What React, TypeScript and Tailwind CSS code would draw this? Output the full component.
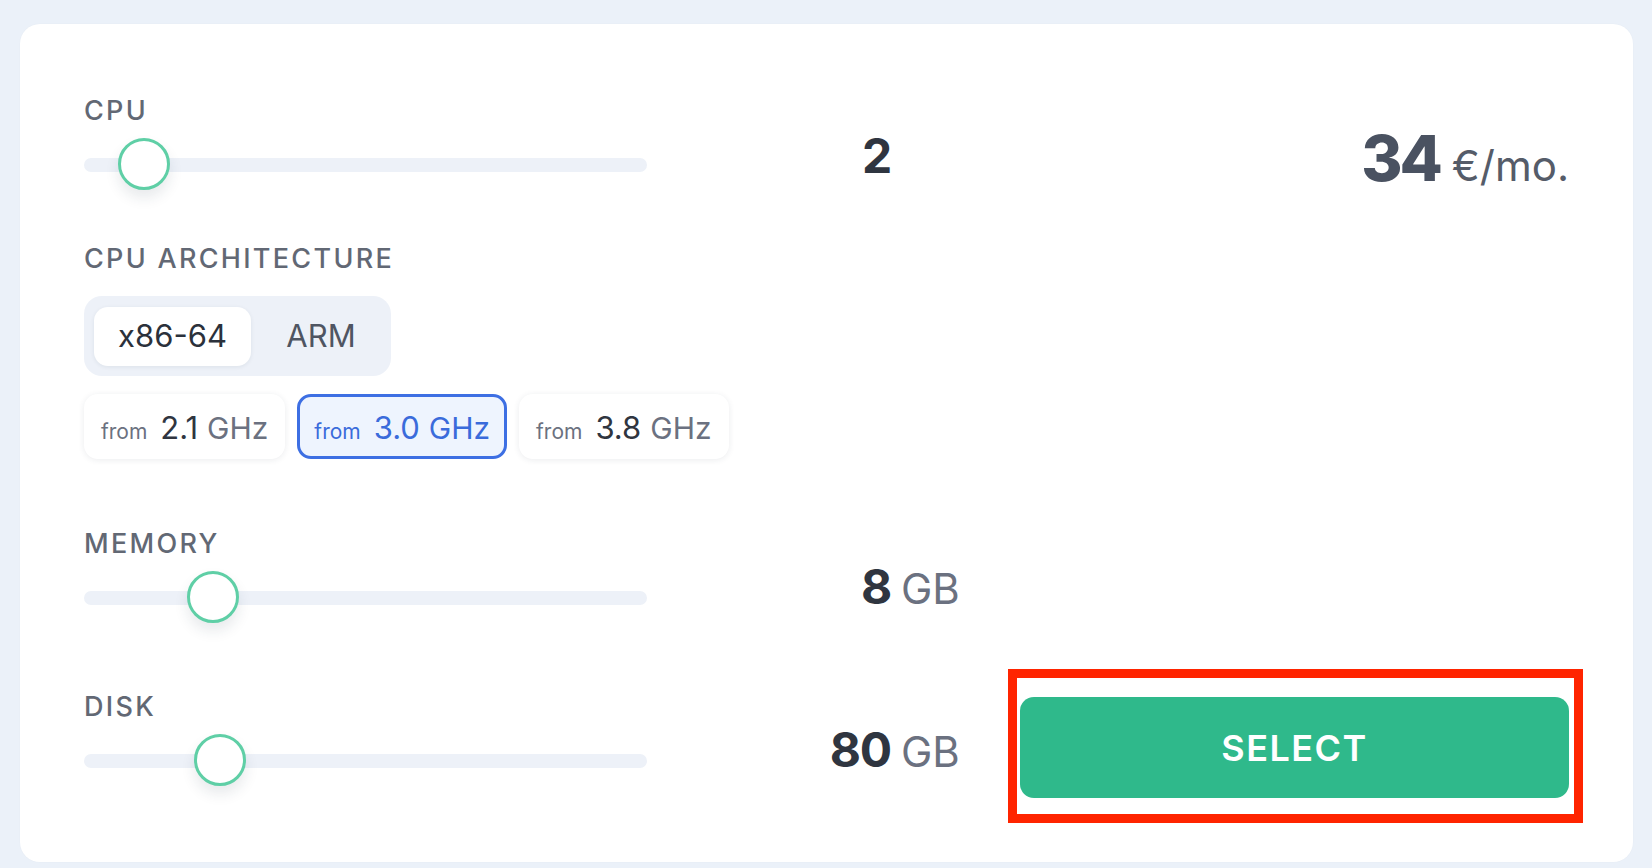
const font = { fontFamily: "Inter, 'Noto Sans', sans-serif" };

function Label({ children }: { children: React.ReactNode }) {
  return (
    <div className="h-[26px] text-[27px] leading-none font-medium tracking-[0.085em] text-[#626874] uppercase">
      {children}
    </div>
  );
}

function Slider({ thumb }: { thumb: string }) {
  return (
    <div className="relative mt-[15px] h-[52px] w-[563px]">
      <div className="absolute inset-x-0 top-[20px] h-[14px] rounded-full bg-[#edf1f8]" />
      <div
        className={`absolute top-0 h-[52px] w-[52px] rounded-full border-[3px] border-[#5fcfa6] bg-white shadow-[0_8px_14px_rgba(30,45,70,0.10)] ${thumb}`}
      />
    </div>
  );
}

function Value({ num, unit }: { num: string; unit?: string }) {
  return (
    <div className="flex items-baseline">
      <span className="w-[164px] text-right text-[48px] leading-none font-bold tracking-tight text-[#2f3540]">
        {num}
      </span>
      {unit && (
        <span className="ml-[10px] text-[42px] leading-none text-[#6b7180]">{unit}</span>
      )}
    </div>
  );
}

const chips = [
  { ghz: "2.1", active: false },
  { ghz: "3.0", active: true },
  { ghz: "3.8", active: false },
];

export default function App() {
  return (
    <div className="min-h-screen w-full bg-[#ebf1f9] pt-[24px] pl-[20px]" style={font}>
      <div className="h-[838px] w-[1613px] rounded-[20px] bg-white pt-[73px] pl-[64px] shadow-[0_0_2px_rgba(0,0,0,0.03)]">
        {/* CPU */}
        <div className="flex items-start">
          <div className="w-[643px]">
            <Label>CPU</Label>
            <Slider thumb="left-[34px]" />
          </div>
          <div className="mt-[35px] w-[293px]">
            <Value num="2" />
          </div>
          <div className="mt-[30px] flex w-[549px] items-baseline justify-end">
            <span className="text-[63px] leading-none font-extrabold tracking-tighter text-[#4a5261]">34</span>
            <span className="ml-[12px] text-[42px] leading-none text-[#555c69]">€/mo.</span>
          </div>
        </div>

        {/* CPU architecture */}
        <div className="mt-[55px]">
          <Label>CPU Architecture</Label>
        </div>
        <div className="mt-[25px] flex h-[80px] w-[307px] items-center rounded-[18px] bg-[#edf1f8] pl-[10px]">
          <button className="h-[59px] w-[157px] rounded-[14px] bg-white text-[31px] text-[#2b313b] shadow-[0_1px_4px_rgba(30,45,70,0.08)]">
            x86-64
          </button>
          <button className="h-[59px] w-[140px] text-[31px] text-[#4f5562]">ARM</button>
        </div>
        <div className="mt-[18px] flex gap-[12px]">
          {chips.map((c) => (
            <div
              key={c.ghz}
              className={
                c.active
                  ? "flex h-[65px] items-center rounded-[14px] border-[3px] border-[#3d6fe3] bg-[#eef4fe] px-[14px] pt-[3px] text-[#3a6bdb]"
                  : "flex h-[65px] items-center rounded-[14px] border-[3px] border-transparent bg-white px-[14px] pt-[3px] shadow-[0_1px_6px_rgba(30,45,70,0.09)]"
              }
            >
              <div className="flex items-baseline">
                <span className={c.active ? "text-[21px]" : "text-[21px] text-[#6b7180]"}>from</span>
                <span className={c.active ? "ml-[13px] text-[31px]" : "ml-[13px] text-[31px] text-[#2f3540]"}>
                  {c.ghz}
                </span>
                <span className={c.active ? "ml-[9px] text-[30px]" : "ml-[9px] text-[30px] text-[#6b7180]"}>
                  GHz
                </span>
              </div>
            </div>
          ))}
        </div>

        {/* Memory */}
        <div className="mt-[71px] flex items-start">
          <div className="w-[643px]">
            <Label>Memory</Label>
            <Slider thumb="left-[103px]" />
          </div>
          <div className="mt-[33px] w-[293px]">
            <Value num="8" unit="GB" />
          </div>
        </div>

        {/* Disk */}
        <div className="mt-[70px] flex items-start">
          <div className="w-[643px]">
            <Label>Disk</Label>
            <Slider thumb="left-[110px]" />
          </div>
          <div className="mt-[33px] w-[293px]">
            <Value num="80" unit="GB" />
          </div>
          <div className="relative mt-[4px] w-[549px]">
            <button className="flex h-[101px] w-full items-center justify-center rounded-[14px] bg-[#2fb98b] text-[36px] font-semibold tracking-[0.04em] text-white">
              SELECT
            </button>
            {/* annotation frame */}
            <div className="pointer-events-none absolute -top-[28px] -right-[14px] -bottom-[25px] -left-[12px] border-[9px] border-[#ff2400]" />
          </div>
        </div>
      </div>
    </div>
  );
}
